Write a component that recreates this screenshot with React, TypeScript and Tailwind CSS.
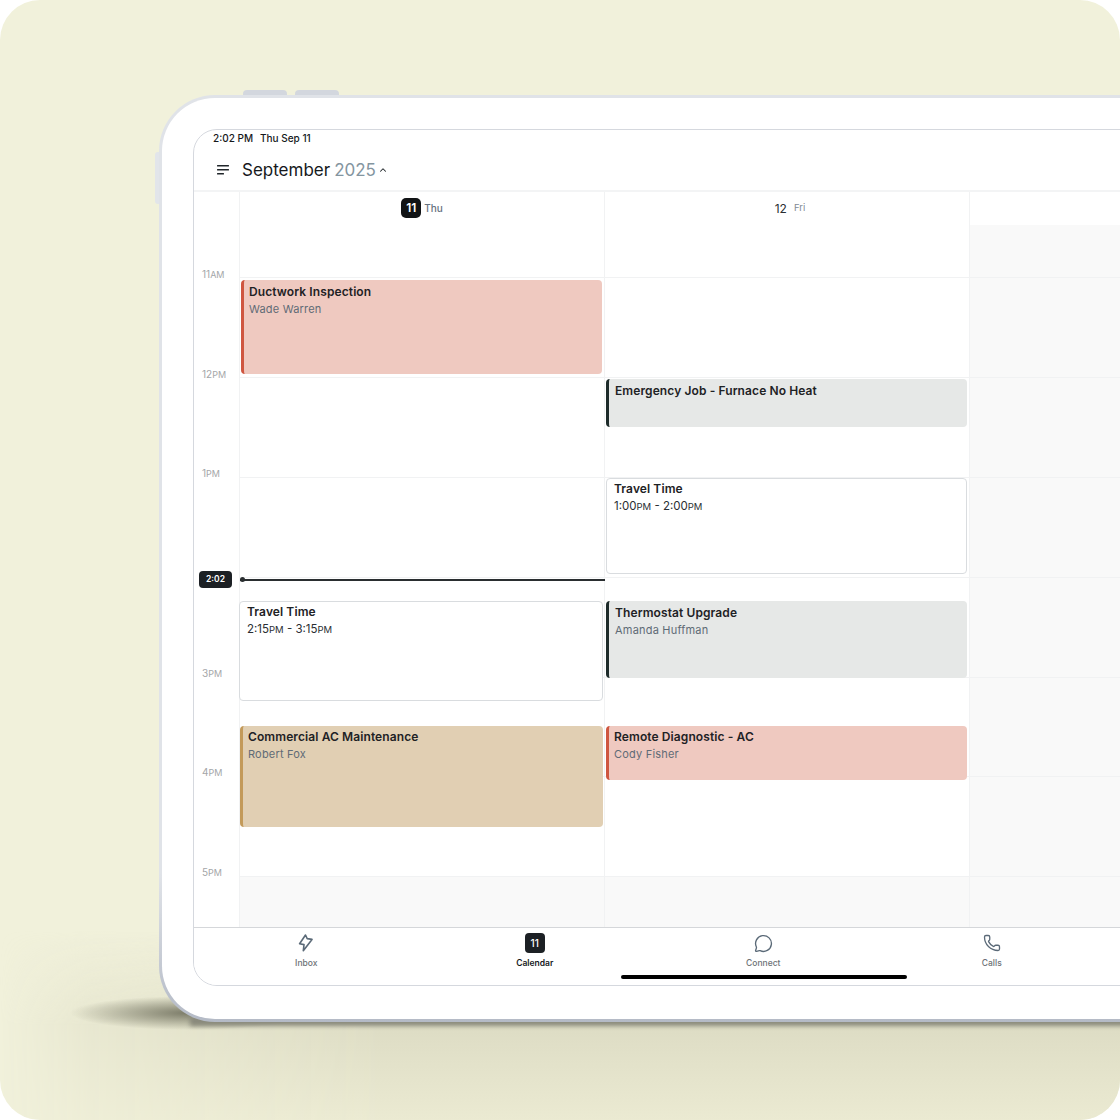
import { MessageCircle, Phone, ChevronUp } from "lucide-react";

type Ev = { title: string; sub?: string; time?: [string, string, string, string]; top: number; h: number; left: number; right: number; kind: "red" | "gray" | "tan" | "white"; tight?: boolean };

const styles = {
  red: "bg-[#efc9c0] border-l-[3px] border-l-[#cf5640] pl-[5px]",
  gray: "bg-[#e6e8e7] border-l-[3px] border-l-[#1d2b2a] pl-[6px]",
  tan: "bg-[#e1cfb3] border-l-[3px] border-l-[#c39a5a] pl-[5px]",
  white: "bg-white border border-[#d9dcdf] pl-[7px]",
};

const col1: Ev[] = [
  { title: "Ductwork Inspection", sub: "Wade Warren", top: 88, h: 94, left: 1, right: 2, kind: "red" },
  { title: "Travel Time", time: ["2:15", "PM", "3:15", "PM"], top: 409, h: 100, left: -1, right: 1, kind: "white" },
  { title: "Commercial AC Maintenance", sub: "Robert Fox", top: 534, h: 101, left: 0, right: 1, kind: "tan", tight: true },
];
const col2: Ev[] = [
  { title: "Emergency Job - Furnace No Heat", top: 187, h: 48, left: 1, right: 2, kind: "gray" },
  { title: "Travel Time", time: ["1:00", "PM", "2:00", "PM"], top: 286, h: 96, left: 1, right: 2, kind: "white" },
  { title: "Thermostat Upgrade", sub: "Amanda Huffman", top: 409, h: 77, left: 1, right: 2, kind: "gray" },
  { title: "Remote Diagnostic - AC", sub: "Cody Fisher", top: 534, h: 54, left: 1, right: 2, kind: "red", tight: true },
];

function Event({ e }: { e: Ev }) {
  const pad = e.kind === "white" ? "pt-[2px]" : e.tight ? "pt-[3px]" : "pt-[4px]";
  return (
    <div
      className={`absolute rounded-[4px] ${styles[e.kind]} ${pad}`}
      style={{ top: e.top, height: e.h, left: e.left, right: e.right }}
    >
      <div className="text-[12px] leading-[16px] font-semibold text-[#1e2225] tracking-[0.1px]">{e.title}</div>
      {e.sub && <div className="text-[11px] leading-[17px] mt-px text-[#5f6b76] tracking-[0.2px]">{e.sub}</div>}
      {e.time && (
        <div className="text-[11.5px] leading-[17px] mt-px text-[#2a2e32]">
          {e.time[0]}
          <span className="text-[9.5px]">{e.time[1]}</span> - {e.time[2]}
          <span className="text-[9.5px]">{e.time[3]}</span>
        </div>
      )}
    </div>
  );
}

const hours = [
  ["11", "AM"],
  ["12", "PM"],
  ["1", "PM"],
  ["", ""],
  ["3", "PM"],
  ["4", "PM"],
  ["5", "PM"],
];

function Rows({ weekend }: { weekend?: boolean }) {
  const bg = weekend ? "bg-[#f9f9f9]" : "bg-white";
  return (
    <>
      <div className={`h-[53px] shrink-0 ${bg} border-b border-[#f1f2f3]`} />
      {[100, 100, 100, 100, 99, 100].map((h, i) => (
        <div key={i} className={`shrink-0 ${bg} border-b border-[#f1f2f3]`} style={{ height: h }} />
      ))}
      <div className="flex-1 bg-[#f9f9f9]" />
    </>
  );
}

function NavItem({ label, active, children }: { label: string; active?: boolean; children: React.ReactNode }) {
  return (
    <div className="w-[228.5px] flex flex-col items-center pt-[5px]">
      <div className="h-[20px] flex items-center justify-center">{children}</div>
      <div className={`mt-[4px] text-[8.5px] leading-[12px] ${active ? "font-semibold text-[#15181b]" : "font-medium text-[#6d7276]"}`}>{label}</div>
    </div>
  );
}

export default function App() {
  return (
    <div className="w-[1120px] h-[1120px] bg-white [font-family:Inter,'Liberation_Sans',sans-serif]">
      <div className="relative w-full h-full rounded-[40px] overflow-hidden bg-[#f1f1db]">
        {/* floor shadows */}
        <div className="absolute left-0 top-[930px] w-[1120px] h-[190px] bg-[linear-gradient(to_bottom,#dddcc400,#dddcc4_50%,#ebead2)] [mask-image:linear-gradient(to_right,transparent,rgba(0,0,0,0.45)_90px,black_380px)]" />
        <div className="absolute left-[70px] top-[996px] w-[240px] h-[34px] bg-[radial-gradient(ellipse_closest-side,#7b7b68,#7b7b6800)]" />
        <div className="absolute left-[190px] top-[1016px] w-[960px] h-[10px] bg-[#8a8a7c] blur-[2px]" />

        {/* side buttons */}
        <div className="absolute left-[243px] top-[90px] w-[44px] h-[8px] rounded-t-[4px] bg-[#d3d7de]" />
        <div className="absolute left-[295px] top-[90px] w-[44px] h-[8px] rounded-t-[4px] bg-[#d3d7de]" />
        <div className="absolute left-[155px] top-[152px] w-[8px] h-[52px] rounded-l-[3px] bg-[#e2e5ea]" />

        {/* tablet */}
        <div className="absolute left-[159px] top-[95px] w-[1100px] h-[927px] rounded-[56px] p-[3px] bg-[linear-gradient(to_bottom,#e0e3e8_84%,#b4bac6)]">
          <div className="h-full rounded-[53px] bg-white pl-[31px] pt-[31px]">
            <div className="w-[1100px] h-[857px] rounded-[24px] border border-[#d5d8de] overflow-hidden flex flex-col bg-white">
              {/* status */}
              <div className="h-[19px] pl-[19px] flex items-center gap-[7px] text-[10px] leading-[14px] text-[#15181b] font-medium shrink-0 pb-[3px]">
                <span>2:02 PM</span>
                <span>Thu Sep 11</span>
              </div>
              {/* header */}
              <div className="h-[43px] shrink-0 flex items-center pl-[23px] border-b-2 border-[#f3f4f5]">
                <svg width="12" height="10" viewBox="0 0 12 10" className="mr-[13px]">
                  <rect x="0" y="0" width="12" height="1.6" rx="0.5" fill="#20262a" />
                  <rect x="0" y="4" width="12" height="1.6" rx="0.5" fill="#20262a" />
                  <rect x="0" y="8" width="7" height="1.6" rx="0.5" fill="#20262a" />
                </svg>
                <span className="text-[17px] leading-[24px] text-[#15181b]">September</span>
                <span className="text-[17px] leading-[24px] text-[#84959f] ml-[4px]">2025</span>
                <ChevronUp size={10} strokeWidth={2.5} className="ml-[2px] text-[#20262a]" />
              </div>
              {/* grid */}
              <div className="flex-1 flex min-h-0 relative">
                <div className="w-[46px] shrink-0 bg-white border-r border-[#f1f2f3] flex flex-col pt-[76px] relative">
                  {hours.map(([n, s], i) => (
                    <div key={i} className="shrink-0 h-[99.67px] pl-[8px] text-[10px] leading-[13px] text-[#a4a6a8]">
                      {n}
                      <span className="text-[9px]">{s}</span>
                    </div>
                  ))}
                  <div className="absolute left-[5px] top-[379px] w-[33px] h-[17px] rounded-[4px] bg-[#1c2024] text-white text-[8.5px] font-semibold flex items-center justify-center">
                    2:02
                  </div>
                </div>

                <div className="relative w-[365px] shrink-0 border-r border-[#f1f2f3] flex flex-col">
                  <div className="h-[33px] shrink-0 flex items-center justify-center pb-[1px]">
                    <span className="w-[20px] h-[20px] rounded-[5px] bg-[#111315] text-white text-[12px] font-semibold flex items-center justify-center">11</span>
                    <span className="ml-[3px] text-[10px] font-medium text-[#66727f]">Thu</span>
                  </div>
                  <Rows />
                  {col1.map((e) => (
                    <Event key={e.title} e={e} />
                  ))}
                  <div className="absolute left-0 right-[-1px] top-[387px] h-[2px] bg-[#2a2e30]" />
                  <div className="absolute left-0 top-[385px] w-[5px] h-[5px] rounded-full bg-[#2a2e30]" />
                </div>

                <div className="relative w-[365px] shrink-0 border-r border-[#f1f2f3] flex flex-col">
                  <div className="h-[33px] shrink-0 flex items-center justify-center pl-[6px]">
                    <span className="text-[12px] text-[#2a2e32] mt-px">12</span>
                    <span className="ml-[7px] text-[9.5px] text-[#7f8a94]">Fri</span>
                  </div>
                  <Rows />
                  {col2.map((e) => (
                    <Event key={e.title + e.top} e={e} />
                  ))}
                </div>

                <div className="flex-1 flex flex-col">
                  <div className="h-[33px] shrink-0 bg-white" />
                  <Rows weekend />
                </div>
              </div>
              {/* nav */}
              <div className="h-[58px] shrink-0 border-t border-[#d5d7da] flex relative bg-white">
                <div className="ml-[-2px] flex">
                  <NavItem label="Inbox">
                    <svg width="16" height="18" viewBox="0 0 16 18" fill="none" stroke="#5b6a78" strokeWidth="1.6" strokeLinejoin="round">
                      <path d="M7.5 1 1.6 9.8 6 10.6 5.3 16.8 14 5.4 9.2 4.6Z" />
                    </svg>
                  </NavItem>
                  <NavItem label="Calendar" active>
                    <span className="w-[20px] h-[20px] rounded-[4px] bg-[#1c2024] text-white text-[10px] font-medium flex items-center justify-center">11</span>
                  </NavItem>
                  <NavItem label="Connect">
                    <MessageCircle size={19} strokeWidth={1.7} className="text-[#5b6a78]" />
                  </NavItem>
                  <NavItem label="Calls">
                    <Phone size={18} strokeWidth={1.75} className="text-[#5b6a78]" />
                  </NavItem>
                </div>
                <div className="absolute left-[427px] top-[47px] w-[286px] h-[4px] rounded-full bg-black" />
              </div>
            </div>
          </div>
        </div>
      </div>
    </div>
  );
}
